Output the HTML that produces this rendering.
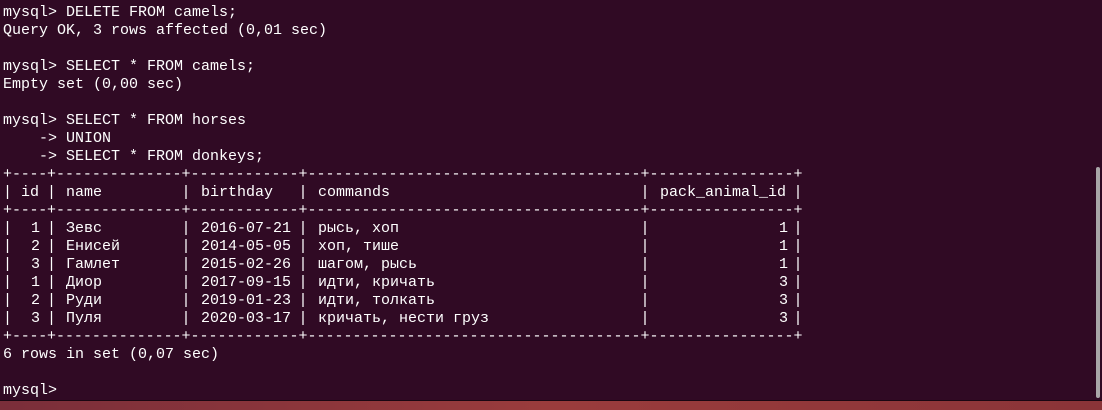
<!DOCTYPE html>
<html><head><meta charset="utf-8"><style>
html,body{margin:0;padding:0;width:1102px;height:409px;overflow:hidden;background:#300a24;}
body{font-family:"Liberation Mono","DejaVu Sans Mono",monospace;font-size:15px;line-height:18px;color:#fff;}
pre{margin:0;position:absolute;left:3px;top:4px;font:inherit;}
.r{position:absolute;left:0;width:900px;height:18px;}
.r span{position:absolute;top:0;white-space:pre;}
.d{overflow:hidden;}
.sb{position:absolute;left:1096px;top:167px;width:4px;height:231px;background:#a9a6a8;border-radius:2px;}
.bot{position:absolute;left:0;top:400px;width:1102px;height:9px;background:linear-gradient(90deg,#7a2e3a,#9a3c3c,#8a3438);border-top:1px solid #1a0612;}
</style></head><body>
<pre>mysql&gt; DELETE FROM camels;
Query OK, 3 rows affected (0,01 sec)

mysql&gt; SELECT * FROM camels;
Empty set (0,00 sec)

mysql&gt; SELECT * FROM horses
    -&gt; UNION
    -&gt; SELECT * FROM donkeys;










6 rows in set (0,07 sec)

mysql&gt; </pre>

<div id="t"></div>
<script>
var s=[7.5,51.5,186,303,645,798];
var html='';
function border(top){
  var h='<div class="r" style="top:'+top+'px">';
  for(var i=0;i<6;i++){h+='<span style="left:'+(s[i]-4.5)+'px">+</span>';}
  for(var i=0;i<5;i++){var w=s[i+1]-s[i]-9;var n=Math.round(w/9);var ls=(w-n*9)/n;
    h+='<span class="d" style="left:'+(s[i]+4.5)+'px;width:'+w+'px;letter-spacing:'+ls+'px">'+'-'.repeat(n)+'</span>';}
  return h+'</div>';
}
function row(top,c){
  var h='<div class="r" style="top:'+top+'px">';
  for(var i=0;i<6;i++){h+='<span style="left:'+(s[i]-4.5)+'px">|</span>';}
  if(c.hdr){h+='<span style="left:21px">id</span>';}
  else h+='<span style="left:31px;width:9px;text-align:right">'+c[0]+'</span>';
  h+='<span style="left:66px">'+c[1]+'</span>';
  h+='<span style="left:201px">'+c[2]+'</span>';
  h+='<span style="left:318px">'+c[3]+'</span>';
  if(c.hdr) h+='<span style="left:660px">'+c[4]+'</span>';
  else h+='<span style="left:779px">'+c[4]+'</span>';
  return h+'</div>';
}
var t=166;
html+=border(t);
var hd=['id','name','birthday','commands','pack_animal_id'];hd.hdr=1;
html+=row(t+18,hd);
html+=border(t+36);
var d=[['1','Зевс','2016-07-21','рысь, хоп','1'],['2','Енисей','2014-05-05','хоп, тише','1'],['3','Гамлет','2015-02-26','шагом, рысь','1'],['1','Диор','2017-09-15','идти, кричать','3'],['2','Руди','2019-01-23','идти, толкать','3'],['3','Пуля','2020-03-17','кричать, нести груз','3']];
for(var i=0;i<d.length;i++)html+=row(t+54+18*i,d[i]);
html+=border(t+54+18*6);
document.getElementById('t').innerHTML=html;
</script>
<div class="sb"></div>
<div class="bot"></div>
</body></html>
